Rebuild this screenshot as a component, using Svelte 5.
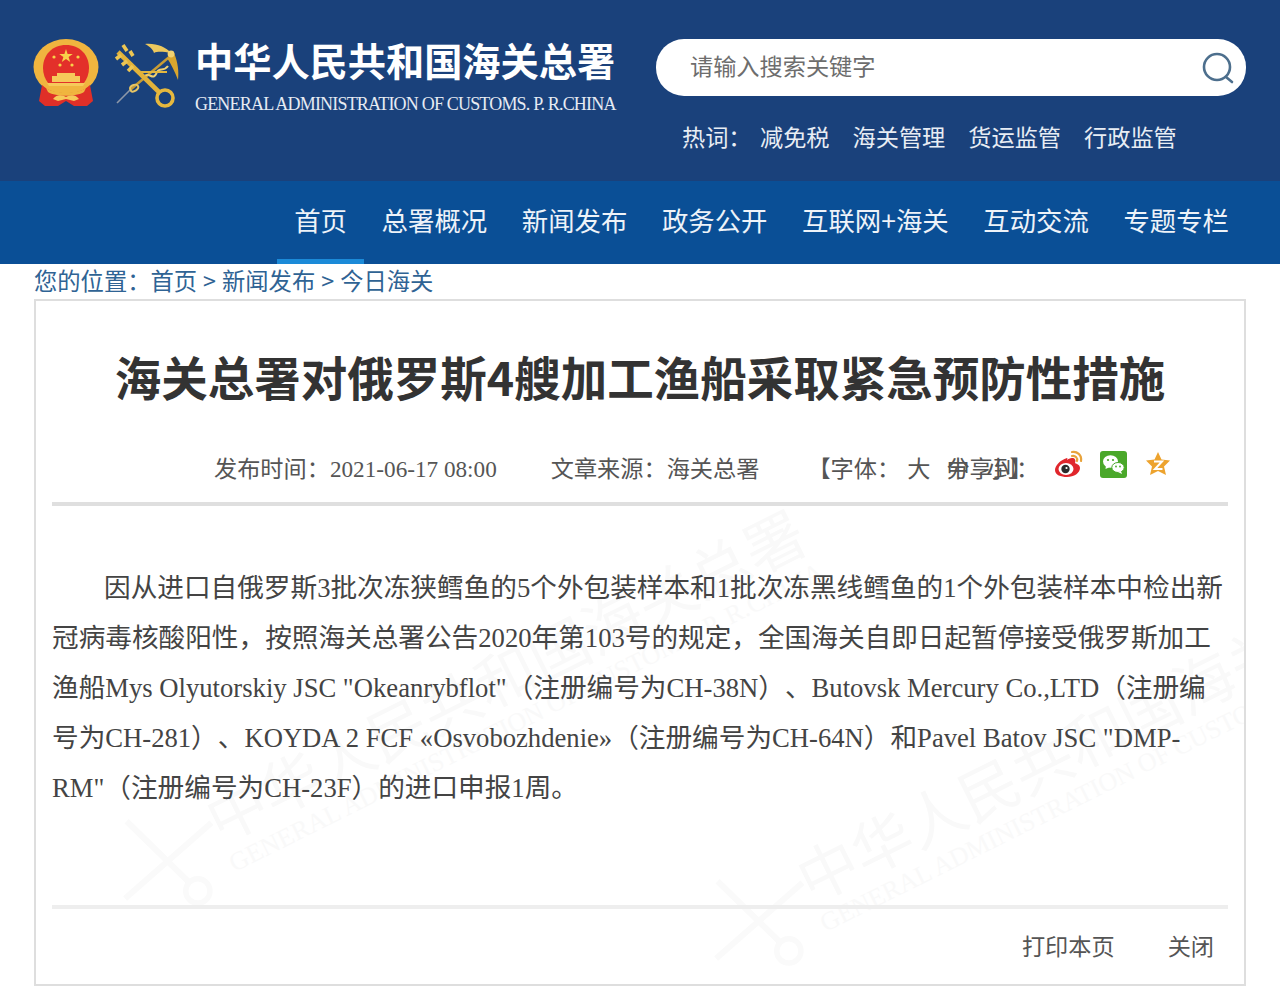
<script>
	const navItems = ['首页', '总署概况', '新闻发布', '政务公开', '互联网+海关', '互动交流', '专题专栏'];
	const hotWords = ['减免税', '海关管理', '货运监管', '行政监管'];
	const watermarks = ['wm-a', 'wm-b'];
</script>

<div class="page">
	<header class="top">
		<div class="brand">
			<!-- national emblem -->
			<svg class="emblem" viewBox="0 0 68 70" width="68" height="70">
				<ellipse cx="33" cy="28" rx="32.5" ry="28" fill="#f0b53f" />
				<path d="M33 6C47 6 56 16 56 29C56 35 54 40 51 44H15C12 40 10 35 10 29C10 16 19 6 33 6Z" fill="#e3302a" />
				<polygon points="33,10 34.6,15 39.8,15 35.6,18 37.2,23 33,20 28.8,23 30.4,18 26.2,15 31.4,15" fill="#f8d24a" />
				<circle cx="21" cy="18" r="1.6" fill="#f8d24a" />
				<circle cx="45" cy="18" r="1.6" fill="#f8d24a" />
				<circle cx="27" cy="26" r="1.6" fill="#f8d24a" />
				<circle cx="39" cy="26" r="1.6" fill="#f8d24a" />
				<path d="M24 34H42V37H47V43H19V37H24Z" fill="#f6c95a" />
				<path d="M14 44H52L50 47H16Z" fill="#f6c95a" />
				<path d="M9 46C16 53 25 54 33 54C41 54 50 53 57 46L60 62L54 67H41L33 62L25 67H12L6 62Z" fill="#df2f28" />
				<path d="M13 49C21 55 45 55 53 49L51 53C43 58 23 58 15 53Z" fill="#f0b53f" />
				<path d="M20 60C24 55 29 56 33 58C37 56 42 55 46 60L41 62L33 60L25 62Z" fill="#f6c95a" />
			</svg>
			<!-- customs key and caduceus -->
			<svg class="key" viewBox="0 0 66 66" width="66" height="66">
				<path d="M60 11L16 48" stroke="#c89c34" stroke-width="2.4" />
				<path d="M16 48L3 61" stroke="#8d98a8" stroke-width="1.6" />
				<path d="M30 35C35 28 39 41 43 30C45 25 50 30 54 24" fill="none" stroke="#f0d070" stroke-width="2" />
				<path d="M17 49C13 44 22 41 24 44C26 47 19 51 17 49Z" fill="none" stroke="#e7c565" stroke-width="2" />
				<path d="M25 30H53" stroke="#e3b73f" stroke-width="2" />
				<path d="M4 10L46 51" stroke="#e2b23a" stroke-width="4.6" />
				<path d="M2 17L7 13M8 23L13 19M14 29L19 24M9 3L13 9M16 9L19 14" stroke="#edc653" stroke-width="3.6" />
				<circle cx="51" cy="56" r="8" fill="none" stroke="#e6b83e" stroke-width="3.6" />
				<path d="M31 2C42 1 52 5 57 11C50 10 44 9 40 11C39 7 35 4 31 2Z" fill="#ecc85e" />
				<path d="M60 11C64 20 65 30 64 38C61 30 57 22 53 16C56 16 58 14 60 11Z" fill="#d9a62e" />
				<circle cx="57" cy="12" r="3.4" fill="#f2d271" />
			</svg>
			<div class="brand-text">
				<div class="brand-cn">中华人民共和国海关总署</div>
				<div class="brand-en">GENERAL ADMINISTRATION OF CUSTOMS. P. R.CHINA</div>
			</div>
		</div>
		<div class="search-area">
			<div class="search">
				<span class="placeholder">请输入搜索关键字</span>
				<svg viewBox="0 0 32 32" width="32" height="32">
					<circle cx="15" cy="15" r="13" fill="none" stroke="#4d6f8d" stroke-width="2.6" />
					<path d="M24 25L30 30" stroke="#4d6f8d" stroke-width="2.6" stroke-linecap="round" />
				</svg>
			</div>
			<div class="hot">
				<span class="hot-label">热词&#xFF1A;</span>
				{#each hotWords as w}
					<span>{w}</span>
				{/each}
			</div>
		</div>
	</header>

	<nav class="nav">
		{#each navItems as item, i}
			<span class="nav-item" class:active={i === 0}>{item}</span>
		{/each}
	</nav>

	<div class="crumbs">
		您的位置&#xFF1A;<span>首页</span><i>&gt;</i>新闻发布<i>&gt;</i>今日海关
	</div>

	<main class="card">
		{#each watermarks as wm}
			<div class="watermark {wm}" aria-hidden="true">
				<svg class="wm-key" viewBox="0 0 66 66" width="100" height="100">
					<path d="M4 10L46 51M60 11L3 61" fill="none" stroke="#fafafa" stroke-width="4" />
					<circle cx="51" cy="56" r="8" fill="none" stroke="#fafafa" stroke-width="3.6" />
				</svg>
				<div class="wm-cn">中华人民共和国海关总署</div>
				<div class="wm-en">GENERAL ADMINISTRATION OF CUSTOMS. P. R.CHINA</div>
			</div>
		{/each}

		<h1>海关总署对俄罗斯4艘加工渔船采取紧急预防性措施</h1>

		<div class="meta">
			<span class="meta-time">发布时间&#xFF1A;2021-06-17 08:00</span>
			<span class="meta-source">文章来源&#xFF1A;海关总署</span>
			<span class="meta-font">【字体&#xFF1A;<b>大</b>
				<span class="overlap">
					<span class="sizes"><em class="s1">中</em><em class="s2">小</em><em class="s3">】</em></span>
					<span class="share">分享到&#xFF1A;</span>
				</span>
			</span>
			<span class="icons">
				<svg viewBox="0 0 30 28" width="30" height="28">
					<path d="M13 8C6 10 1 16 1 20C1 25 7 27 13 27C20 27 26 23 26 18C26 15 23 14 21 13C22 10 21 8 18 8C16 8 14 9 13 10C13 9 14 8 13 8Z" fill="#e0262c" />
					<ellipse cx="12" cy="19" rx="7.5" ry="6" fill="#fff" />
					<circle cx="11.5" cy="19" r="4.2" fill="#2b2b2b" />
					<circle cx="12.5" cy="18" r="1.1" fill="#fff" />
					<path d="M18 2C23 1 28 5 27 11M18 6C21 5 24 8 23 11" fill="none" stroke="#e8a33c" stroke-width="2.2" stroke-linecap="round" />
				</svg>
				<svg viewBox="0 0 27 27" width="27" height="27">
					<rect width="27" height="27" rx="3" fill="#4aa82a" />
					<ellipse cx="10.5" cy="10.5" rx="7.5" ry="6.2" fill="#fff" />
					<path d="M6 14L5.5 18L10 16Z" fill="#fff" />
					<ellipse cx="18" cy="16.5" rx="6.2" ry="5" fill="#fff" stroke="#4aa82a" stroke-width="1" />
					<path d="M21 20L22 23L18 21Z" fill="#fff" />
					<circle cx="8" cy="9" r="1.1" fill="#4aa82a" />
					<circle cx="13" cy="9" r="1.1" fill="#4aa82a" />
					<circle cx="16" cy="15.5" r=".9" fill="#4aa82a" />
					<circle cx="20" cy="15.5" r=".9" fill="#4aa82a" />
				</svg>
				<svg viewBox="0 0 26 26" width="26" height="26">
					<polygon points="13,1 16.5,8.5 25,9.5 19,15.5 21,24 13,20 5,24 7,15.5 1,9.5 9.5,8.5" fill="#eda32e" />
					<path d="M9 10.5H17L10 18H17.5" fill="none" stroke="#fff" stroke-width="2" />
				</svg>
			</span>
		</div>

		<div class="rule"></div>

		<article class="content">
			<p>因从进口自俄罗斯3批次冻狭鳕鱼的5个外包装样本和1批次冻黑线鳕鱼的1个外包装样本中检出新冠病毒核酸阳性&#xFF0C;按照海关总署公告2020年第103号的规定&#xFF0C;全国海关自即日起暂停接受俄罗斯加工渔船Mys Olyutorskiy JSC "Okeanrybflot"&#xFF08;注册编号为CH-38N&#xFF09;、Butovsk Mercury Co.,LTD&#xFF08;注册编号为CH-281&#xFF09;、KOYDA 2 FCF «Osvobozhdenie»&#xFF08;注册编号为CH-64N&#xFF09;和Pavel Batov JSC "DMP-RM"&#xFF08;注册编号为CH-23F&#xFF09;的进口申报1周。</p>
		</article>

		<div class="rule light"></div>

		<div class="actions">
			<span>打印本页</span>
			<span>关闭</span>
		</div>
	</main>
</div>

<style>
	:global(body) {
		margin: 0;
		background: #fff;
	}

	.page {
		width: 1280px;
		height: 990px;
		overflow: hidden;
		font-family: "Liberation Serif", "Noto Sans CJK SC", serif;
		color: #555;
		text-spacing-trim: space-all;
	}

	/* header */
	.top {
		height: 181px;
		box-sizing: border-box;
		background: #1a417b;
		display: flex;
		justify-content: space-between;
		padding: 39px 34px 0 33px;
		color: #fff;
	}

	.brand {
		display: flex;
		align-items: flex-start;
	}

	.key {
		margin: 3px 0 0 13px;
	}

	.brand-text {
		margin-left: 15px;
	}

	.brand-cn {
		font-family: "Noto Sans CJK SC", sans-serif;
		font-weight: 700;
		font-size: 38.2px;
		line-height: 46px;
		margin-top: -2px;
		white-space: nowrap;
	}

	.brand-en {
		font-size: 18px;
		line-height: 24px;
		margin-top: 9px;
		letter-spacing: -0.81px;
		white-space: nowrap;
		color: #e6ebf3;
	}

	.search-area {
		width: 590px;
	}

	.search {
		height: 57px;
		background: #fff;
		border-radius: 28px;
		display: flex;
		align-items: center;
		justify-content: space-between;
		padding: 0 12px 0 34px;
		box-sizing: border-box;
	}

	.placeholder {
		font-family: "Noto Sans CJK SC", sans-serif;
		font-size: 23.2px;
		line-height: 34px;
		margin-top: -6px;
		color: #6d6d6d;
	}

	.hot {
		display: flex;
		gap: 23px;
		margin: 23px 0 0 26px;
		font-family: "Noto Sans CJK SC", sans-serif;
		font-size: 23.2px;
		line-height: 34px;
		color: #e8edf4;
	}

	.hot-label {
		width: 55px;
		white-space: nowrap;
	}

	.nav {
		height: 83px;
		background: #0a4f96;
		display: flex;
		justify-content: flex-end;
		gap: 34.6px;
		padding-right: 51px;
		font-family: "Noto Sans CJK SC", sans-serif;
		font-size: 26.4px;
		color: #eef3f9;
	}

	.nav-item {
		position: relative;
		line-height: 78px;
		white-space: nowrap;
	}

	.nav-item.active::after {
		content: '';
		position: absolute;
		left: -17px;
		right: -17px;
		top: 78px;
		height: 5px;
		background: #1b8ad8;
	}

	.crumbs {
		height: 35px;
		padding-left: 34px;
		font-family: "Noto Sans CJK SC", sans-serif;
		font-size: 23.3px;
		line-height: 32px;
		color: #2f6394;
	}

	.crumbs i {
		font-style: normal;
		margin: 0 6px;
	}

	/* article card */
	.card {
		position: relative;
		overflow: hidden;
		width: 1212px;
		height: 687px;
		box-sizing: border-box;
		margin-left: 34px;
		border: 2px solid #dedede;
		padding: 0 16px;
		background: #fff;
	}

	.watermark {
		position: absolute;
		white-space: nowrap;
		color: #f9f9f9;
		transform: rotate(-26.5deg);
		transform-origin: left top;
	}

	.wm-cn {
		font-family: "Noto Sans CJK SC", sans-serif;
		font-size: 60px;
		line-height: 70px;
	}

	.wm-en {
		font-size: 26px;
		line-height: 30px;
	}

	.wm-key {
		position: absolute;
		left: -100px;
		top: 0;
		transform: rotate(26.5deg);
	}

	.wm-a {
		left: 157px;
		top: 488px;
	}

	.wm-b {
		left: 748px;
		top: 548px;
	}

	h1 {
		position: relative;
		margin: 0;
		padding-top: 42px;
		text-align: center;
		font-family: "Noto Sans CJK SC", sans-serif;
		font-weight: 700;
		font-size: 46.5px;
		line-height: 66px;
		color: #333;
		white-space: nowrap;
	}

	.meta {
		position: relative;
		display: flex;
		align-items: center;
		height: 40px;
		margin-top: 38px;
		font-size: 23.2px;
		white-space: nowrap;
	}

	.meta-time {
		margin-left: 162px;
	}

	.meta-source {
		margin-left: 54px;
	}

	.meta-font {
		margin-left: 48px;
		display: flex;
		align-items: center;
	}

	.meta-font b {
		font-weight: 400;
		margin-left: 7px;
	}

	.overlap {
		position: relative;
		width: 73px;
		margin: 3px 0 0 16px;
		height: 30px;
	}

	.share {
		position: absolute;
		left: 0;
		top: 0;
		line-height: 30px;
	}

	.sizes em {
		position: absolute;
		top: 0;
		line-height: 30px;
		font-style: normal;
	}

	.s1 {
		left: 0;
	}

	.s2 {
		left: 40px;
	}

	.s3 {
		left: 63px;
	}

	.icons {
		display: flex;
		align-items: center;
		gap: 16px;
		margin-left: 35px;
		margin-top: -6px;
	}

	.icons svg:last-child {
		margin-left: 2px;
		margin-right: -2px;
	}

	.rule {
		position: relative;
		height: 4px;
		background: #dfdfdf;
		margin-top: 15px;
	}

	.rule.light {
		background: #eeeeee;
		margin-top: 0;
	}

	.content {
		position: relative;
		height: 399px;
		font-size: 26.65px;
		line-height: 50px;
		color: #444;
	}

	.content p {
		margin: 0;
		padding-top: 57px;
		text-indent: 52px;
	}

	.actions {
		position: relative;
		display: flex;
		justify-content: flex-end;
		gap: 53px;
		padding: 21px 14px 0 0;
		font-size: 23.2px;
		line-height: 34px;
	}
</style>
